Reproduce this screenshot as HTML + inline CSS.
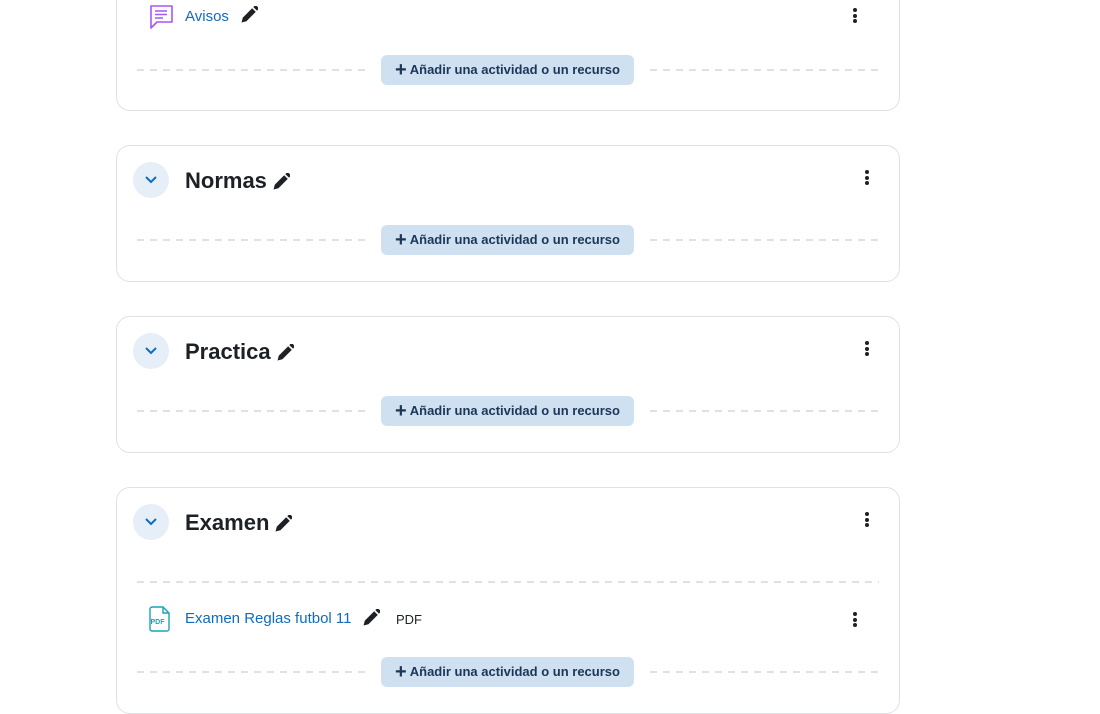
<!DOCTYPE html>
<html><head><meta charset="utf-8"><style>
body{margin:0;width:1100px;height:713px;overflow:hidden;background:#fff;font-family:"Liberation Sans",sans-serif;position:relative}
.card{position:absolute;left:116px;width:782px;border:1px solid #dee2e6;border-radius:14px;box-sizing:content-box}
.circ{position:absolute;left:16px;width:36px;height:36px;border-radius:50%;background:#e6eef8}
.circ svg{position:absolute;left:11px;top:12px}
.title{position:absolute;left:68px;font-size:22px;font-weight:bold;color:#1d2125;line-height:26px}
.title svg{margin-left:6px;vertical-align:-2px}
.kebab{position:absolute;left:748px;width:4px}
.kebab i{display:block;width:4px;height:4px;border-radius:50%;background:#1d2125;margin-bottom:1.5px}
.dash{position:absolute;height:2px;background:repeating-linear-gradient(90deg,#dee2e6 0 7px,transparent 7px 13px)}
.btn{position:absolute;left:264px;width:253px;height:30px;border-radius:6px;background:#cfe1f0;color:#1d3557;font-size:13px;font-weight:bold;line-height:30px;text-align:center}
.btn b{font-size:20px;vertical-align:-2px;margin-right:3px;font-weight:bold}
.link{position:absolute;color:#0f6cbf;font-size:15px;line-height:18px}
</style></head><body>

<!-- card 1 -->
<div class="card" style="top:-30px;height:139px">
 <svg style="position:absolute;left:32px;top:33px" width="25" height="26" viewBox="0 0 25 26"><path d="M2 2h21v16H8l-6 6z" fill="none" stroke="#a855f7" stroke-width="1.6" stroke-linejoin="round"/><path d="M6 7h12M6 10.5h12M6 14h8" stroke="#a855f7" stroke-width="1.6"/></svg>
 <div class="link" style="left:68px;top:37px">Avisos</div>
 <svg style="position:absolute;left:124px;top:35px" width="17" height="17" viewBox="0 0 16 16"><path d="M0.5 15.5l1.2-4.6L10.5 2.1l3.4 3.4-8.8 8.8z M11.6 1l1.4-1.4a1 1 0 0 1 1.4 0l2 2a1 1 0 0 1 0 1.4L15 4.4z" fill="#1d2125"/></svg>
 <div class="kebab" style="top:37px;left:736px"><i></i><i></i><i></i></div>
 <div class="dash" style="left:20px;width:228px;top:98px"></div>
 <div class="dash" style="left:533px;width:229px;top:98px"></div>
 <div class="btn" style="top:84px"><b>+</b>Añadir una actividad o un recurso</div>
</div>

<div class="card" style="top:145px;height:135px">
 <div class="circ" style="top:16px"><svg width="14" height="12" viewBox="0 0 14 12"><path d="M2 3l5 5 5-5" fill="none" stroke="#0f6cbf" stroke-width="2"/></svg></div>
 <div class="title" style="top:22px">Normas<svg width="17" height="17" viewBox="0 0 16 16"><path d="M0.5 15.5l1.2-4.6L10.5 2.1l3.4 3.4-8.8 8.8z M11.6 1l1.4-1.4a1 1 0 0 1 1.4 0l2 2a1 1 0 0 1 0 1.4L15 4.4z" fill="#1d2125"/></svg></div>
 <div class="kebab" style="top:24px"><i></i><i></i><i></i></div>
 <div class="dash" style="left:20px;width:228px;top:93px"></div>
 <div class="dash" style="left:533px;width:229px;top:93px"></div>
 <div class="btn" style="top:79px"><b>+</b>Añadir una actividad o un recurso</div>
</div>

<div class="card" style="top:316px;height:135px">
 <div class="circ" style="top:16px"><svg width="14" height="12" viewBox="0 0 14 12"><path d="M2 3l5 5 5-5" fill="none" stroke="#0f6cbf" stroke-width="2"/></svg></div>
 <div class="title" style="top:22px">Practica<svg width="17" height="17" viewBox="0 0 16 16"><path d="M0.5 15.5l1.2-4.6L10.5 2.1l3.4 3.4-8.8 8.8z M11.6 1l1.4-1.4a1 1 0 0 1 1.4 0l2 2a1 1 0 0 1 0 1.4L15 4.4z" fill="#1d2125"/></svg></div>
 <div class="kebab" style="top:24px"><i></i><i></i><i></i></div>
 <div class="dash" style="left:20px;width:228px;top:93px"></div>
 <div class="dash" style="left:533px;width:229px;top:93px"></div>
 <div class="btn" style="top:79px"><b>+</b>Añadir una actividad o un recurso</div>
</div>

<div class="card" style="top:487px;height:225px">
 <div class="circ" style="top:16px"><svg width="14" height="12" viewBox="0 0 14 12"><path d="M2 3l5 5 5-5" fill="none" stroke="#0f6cbf" stroke-width="2"/></svg></div>
 <div class="title" style="top:22px">Examen<svg width="17" height="17" viewBox="0 0 16 16"><path d="M0.5 15.5l1.2-4.6L10.5 2.1l3.4 3.4-8.8 8.8z M11.6 1l1.4-1.4a1 1 0 0 1 1.4 0l2 2a1 1 0 0 1 0 1.4L15 4.4z" fill="#1d2125"/></svg></div>
 <div class="kebab" style="top:24px"><i></i><i></i><i></i></div>
 <div class="dash" style="left:20px;width:742px;top:93px"></div>
 <svg style="position:absolute;left:32px;top:118px" width="22" height="26" viewBox="0 0 22 26"><path d="M3 1h11l6 6v16a2 2 0 0 1-2 2H3a2 2 0 0 1-2-2V3a2 2 0 0 1 2-2z M14 1v6h6" fill="none" stroke="#1aa3b5" stroke-width="1.4"/><text x="1.5" y="18" font-size="7" font-weight="bold" fill="#1aa3b5" font-family="Liberation Sans">PDF</text></svg>
 <div class="link" style="left:68px;top:122px">Examen Reglas futbol 11</div>
 <svg style="position:absolute;left:246px;top:121px" width="17" height="17" viewBox="0 0 16 16"><path d="M0.5 15.5l1.2-4.6L10.5 2.1l3.4 3.4-8.8 8.8z M11.6 1l1.4-1.4a1 1 0 0 1 1.4 0l2 2a1 1 0 0 1 0 1.4L15 4.4z" fill="#1d2125"/></svg>
 <div style="position:absolute;left:279px;top:124px;font-size:13px;color:#1d2125">PDF</div>
 <div class="kebab" style="top:124px;left:736px"><i></i><i></i><i></i></div>
 <div class="dash" style="left:20px;width:228px;top:183px"></div>
 <div class="dash" style="left:533px;width:229px;top:183px"></div>
 <div class="btn" style="top:169px"><b>+</b>Añadir una actividad o un recurso</div>
</div>
</body></html>
